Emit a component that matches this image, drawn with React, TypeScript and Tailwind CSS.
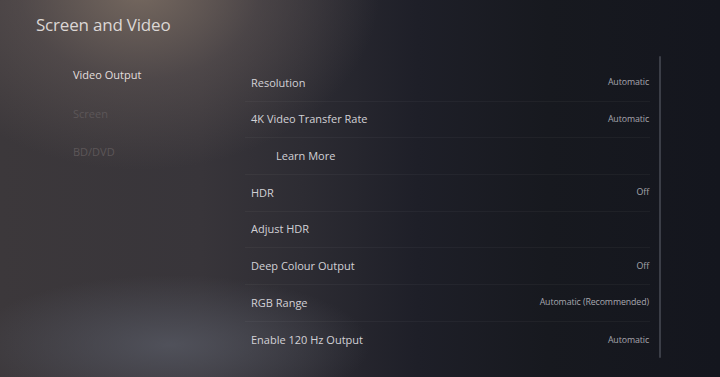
const font = "font-['Open_Sans','Noto_Sans',sans-serif]";

const navItems = [
  { label: "Video Output", active: true },
  { label: "Screen", active: false },
  { label: "BD/DVD", active: false },
];

const rows: { label: string; value?: string; indent?: boolean; last?: boolean }[] = [
  { label: "Resolution", value: "Automatic" },
  { label: "4K Video Transfer Rate", value: "Automatic" },
  { label: "Learn More", indent: true },
  { label: "HDR", value: "Off" },
  { label: "Adjust HDR" },
  { label: "Deep Colour Output", value: "Off" },
  { label: "RGB Range", value: "Automatic (Recommended)" },
  { label: "Enable 120 Hz Output", value: "Automatic", last: true },
];

export default function App() {
  return (
    <div
      className={`${font} w-[720px] h-[377px] overflow-hidden bg-[#15171f] bg-[radial-gradient(ellipse_240px_180px_at_140px_-10px,#75685f_0%,rgba(110,98,95,0.4)_50%,transparent_100%),radial-gradient(ellipse_200px_70px_at_170px_345px,rgba(84,86,96,0.85)_0%,transparent_100%),linear-gradient(90deg,#3c383b_0%,#38353a_28%,#2d2c33_42%,#1e1f28_58%,#17191f_76%,#14161e_100%)]`}
    >
      <div className="h-[56px] pl-[36px] pt-[13px]">
        <h1 className="text-[17px] leading-[24px] text-[#dcd7d5] tracking-[-0.2px]">
          Screen and Video
        </h1>
      </div>

      <div className="flex">
        <nav className="w-[245px] pl-[73px] flex flex-col">
          {navItems.map((n) => (
            <div
              key={n.label}
              className={`h-[38.5px] flex items-center text-[11px] ${
                n.active ? "text-[#e2dedd]" : "text-[#5c5658]"
              }`}
            >
              {n.label}
            </div>
          ))}
        </nav>

        <div className="w-[405px] mt-[9px] flex flex-col">
          {rows.map((r) => (
            <div
              key={r.label}
              className={`h-[36.7px] flex items-center justify-between pr-[1px] ${
                r.indent ? "pl-[31px]" : "pl-[6px]"
              } ${
                r.last ? "" : "border-b border-[rgba(255,255,255,0.04)]"
              }`}
            >
              <span className="text-[11px] text-[#d2d1d6]">{r.label}</span>
              {r.value ? (
                <span className="text-[8.8px] text-[#a6a6ae] tracking-[-0.1px]">
                  {r.value}
                </span>
              ) : null}
            </div>
          ))}
        </div>

        <div className="ml-[9px] w-[2px] h-[302px] bg-[#3b3e47] rounded-full" />
      </div>
    </div>
  );
}
